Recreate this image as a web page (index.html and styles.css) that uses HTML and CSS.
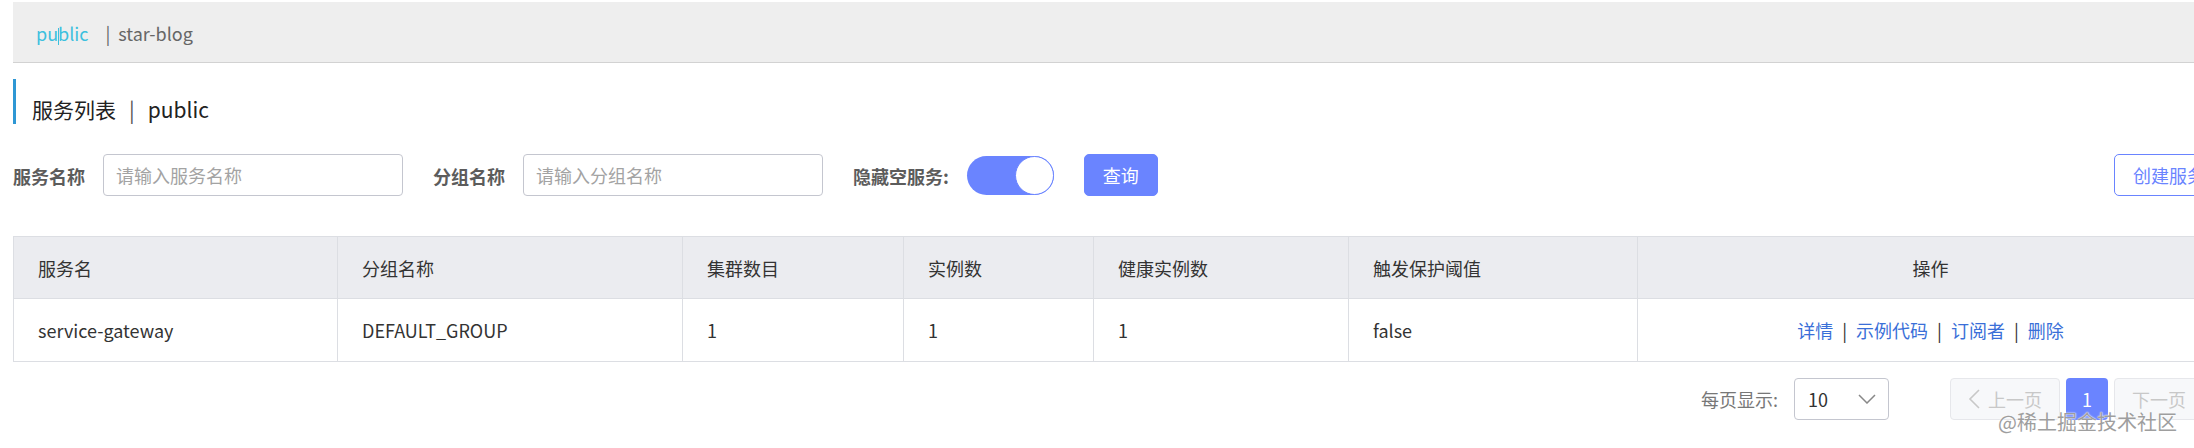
FILE: index.html
```html
<!DOCTYPE html>
<html lang="zh-CN">
<head>
<meta charset="utf-8">
<title>服务列表</title>
<link rel="stylesheet" href="styles.css">
</head>
<body>
<div class="page">
  <div class="ns-bar">
    <span class="ns-item ns-active">pu<span class="caret"></span>blic</span>
    <span class="ns-sep">|</span>
    <span class="ns-item">star-blog</span>
  </div>

  <div class="page-title">
    <span class="title-main">服务列表</span>
    <span class="title-sep">|</span>
    <span class="title-ns">public</span>
  </div>

  <div class="search-row">
    <div class="search-left">
      <span class="field-label">服务名称</span>
      <input class="text-input" type="text" placeholder="请输入服务名称">
      <span class="field-label">分组名称</span>
      <input class="text-input" type="text" placeholder="请输入分组名称">
      <span class="field-label">隐藏空服务:</span>
      <span class="switch"><span class="knob"></span></span>
      <button class="btn btn-primary">查询</button>
    </div>
    <button class="btn btn-outline">创建服务</button>
  </div>

  <table class="grid">
    <colgroup>
      <col class="c1"><col class="c2"><col class="c3"><col class="c4"><col class="c5"><col class="c6"><col class="c7">
    </colgroup>
    <thead>
      <tr>
        <th>服务名</th>
        <th>分组名称</th>
        <th>集群数目</th>
        <th>实例数</th>
        <th>健康实例数</th>
        <th>触发保护阈值</th>
        <th class="center">操作</th>
      </tr>
    </thead>
    <tbody>
      <tr>
        <td>service-gateway</td>
        <td>DEFAULT_GROUP</td>
        <td>1</td>
        <td>1</td>
        <td>1</td>
        <td>false</td>
        <td class="center"><a class="link">详情</a><span class="lsep">|</span><a class="link">示例代码</a><span class="lsep">|</span><a class="link">订阅者</a><span class="lsep">|</span><a class="link">删除</a></td>
      </tr>
    </tbody>
  </table>

  <div class="pager">
    <span class="pager-label">每页显示:</span>
    <span class="select">
      <span class="select-value">10</span>
      <svg class="chev" width="18" height="10" viewBox="0 0 18 10"><polyline points="1,1 9,9 17,1" fill="none" stroke="#888" stroke-width="1.5"/></svg>
    </span>
    <span class="pages">
      <span class="pbtn pbtn-disabled"><svg width="12" height="20" viewBox="0 0 12 20"><polyline points="11,1 2,10 11,19" fill="none" stroke="#c8c8c8" stroke-width="1.6"/></svg>上一页</span>
      <span class="pnum">1</span>
      <span class="pbtn pbtn-disabled">下一页<svg width="12" height="20" viewBox="0 0 12 20"><polyline points="1,1 10,10 1,19" fill="none" stroke="#c8c8c8" stroke-width="1.6"/></svg></span>
    </span>
  </div>
</div>
<div class="watermark">@稀土掘金技术社区</div>
</body>
</html>
```

FILE: styles.css
```css
html, body {
  margin: 0;
  overflow: hidden;
  background: #fff;
}

body {
  position: relative;
  width: 2194px;
  height: 448px;
  box-sizing: border-box;
  padding: 2px 0 0 13px;
  font-family: "Noto Sans CJK SC", "Noto Sans", sans-serif;
  color: #333;
}

.page {
  width: 2211px;
}

/* namespace bar */
.ns-bar {
  display: flex;
  align-items: baseline;
  height: 58px;
  padding-top: 2px;
  line-height: 58px;
  padding-left: 23px;
  background: #eeeeee;
  border-bottom: 1px solid #d2d2d2;
  font-size: 18px;
  color: #666;
  white-space: nowrap;
}

.ns-active {
  color: #3cc0de;
  margin-right: 17px;
}

.caret {
  display: inline-block;
  width: 1px;
  height: 17px;
  margin-right: -1px;
  background: #3cc0de;
  vertical-align: -4px;
}

.ns-sep {
  margin-right: 8px;
}

/* page title */
.page-title {
  display: flex;
  align-items: baseline;
  margin-top: 16px;
  height: 25px;
  padding: 20px 0 0 16px;
  border-left: 3px solid #2e97d4;
  font-size: 21px;
  line-height: 21px;
  color: #222;
  white-space: nowrap;
}

.title-sep {
  margin: 0 13px 0 13px;
  color: #555;
}

/* search row */
.search-row {
  margin-top: 30px;
  height: 42px;
  display: flex;
  justify-content: space-between;
  align-items: center;
}

.search-left {
  display: flex;
  align-items: center;
}

.field-label {
  font-size: 18px;
  font-weight: bold;
  color: #5c5c5c;
  margin-right: 18px;
  padding-top: 2px;
}

.text-input {
  box-sizing: border-box;
  width: 300px;
  height: 42px;
  padding: 0 12px;
  border: 1px solid #c4c6cf;
  border-radius: 4px;
  font-family: inherit;
  font-size: 18px;
  color: #333;
  outline: none;
  margin: 0 30px 0 0;
  background: #fff;
}

.text-input::placeholder {
  color: #a3a3a3;
}

.switch {
  position: relative;
  display: inline-block;
  width: 87px;
  height: 39px;
  border-radius: 20px;
  background: #6a84ff;
  margin-right: 30px;
}

.knob {
  position: absolute;
  top: 0;
  right: 0;
  width: 37px;
  height: 37px;
  border-radius: 50%;
  background: #fff;
  border: 1px solid #6a84ff;
}

.btn {
  box-sizing: border-box;
  height: 42px;
  border-radius: 5px;
  font-family: inherit;
  font-size: 18px;
  line-height: 40px;
  cursor: pointer;
  white-space: nowrap;
}

.btn-primary {
  width: 74px;
  padding: 0;
  background: #6a84ff;
  border: 1px solid #6a84ff;
  color: #fff;
}

.btn-outline {
  width: 110px;
  padding: 0 18px;
  background: #fff;
  border: 1px solid #6a84ff;
  color: #6a84ff;
  text-align: left;
}

/* table */
.grid {
  margin-top: 40px;
  width: 2210px;
  table-layout: fixed;
  border-collapse: collapse;
  border: 1px solid #dcdee3;
  font-size: 18px;
}

.c1 { width: 324px; }
.c2 { width: 345px; }
.c3 { width: 221px; }
.c4 { width: 190px; }
.c5 { width: 255px; }
.c6 { width: 289px; }
.c7 { width: 586px; }

.grid th,
.grid td {
  border: 1px solid #dcdee3;
  padding: 0 24px;
  text-align: left;
  font-weight: normal;
  white-space: nowrap;
  color: #333;
}

.grid th {
  height: 61px;
  background: #ebecf0;
}

.grid td {
  height: 62px;
  background: #fff;
}

.grid .center {
  text-align: center;
}

.link {
  color: #3a6fd8;
  cursor: pointer;
}

.lsep {
  display: inline-block;
  margin: 0 9px;
  color: #333;
}

/* pager */
.pager {
  margin-top: 16px;
  height: 42px;
  display: flex;
  justify-content: flex-end;
  align-items: center;
  font-size: 18px;
}

.pager-label {
  color: #777;
  margin-right: 16px;
}

.select {
  box-sizing: border-box;
  width: 95px;
  height: 42px;
  border: 1px solid #c4c6cf;
  border-radius: 4px;
  display: flex;
  align-items: center;
  justify-content: space-between;
  padding: 0 12px 0 13px;
  margin-right: 61px;
  color: #333;
}

.chev {
  display: block;
}

.pages {
  display: flex;
  gap: 6px;
}

.pbtn {
  box-sizing: border-box;
  width: 110px;
  height: 42px;
  border: 1px solid #e6e7eb;
  border-radius: 4px;
  background: #f7f8fa;
  color: #c8c8c8;
  display: flex;
  align-items: center;
  justify-content: center;
  gap: 8px;
}

.pbtn svg {
  display: block;
}

.pnum {
  box-sizing: border-box;
  width: 42px;
  height: 42px;
  border-radius: 4px;
  background: #6a84ff;
  color: #fff;
  display: flex;
  align-items: center;
  justify-content: center;
}

.watermark {
  position: absolute;
  right: 17px;
  top: 409px;
  font-size: 20px;
  line-height: 26px;
  color: #9e9e9e;
  text-shadow: 0 0 2px #fff, 0 0 1px #fff;
  white-space: nowrap;
}
```
